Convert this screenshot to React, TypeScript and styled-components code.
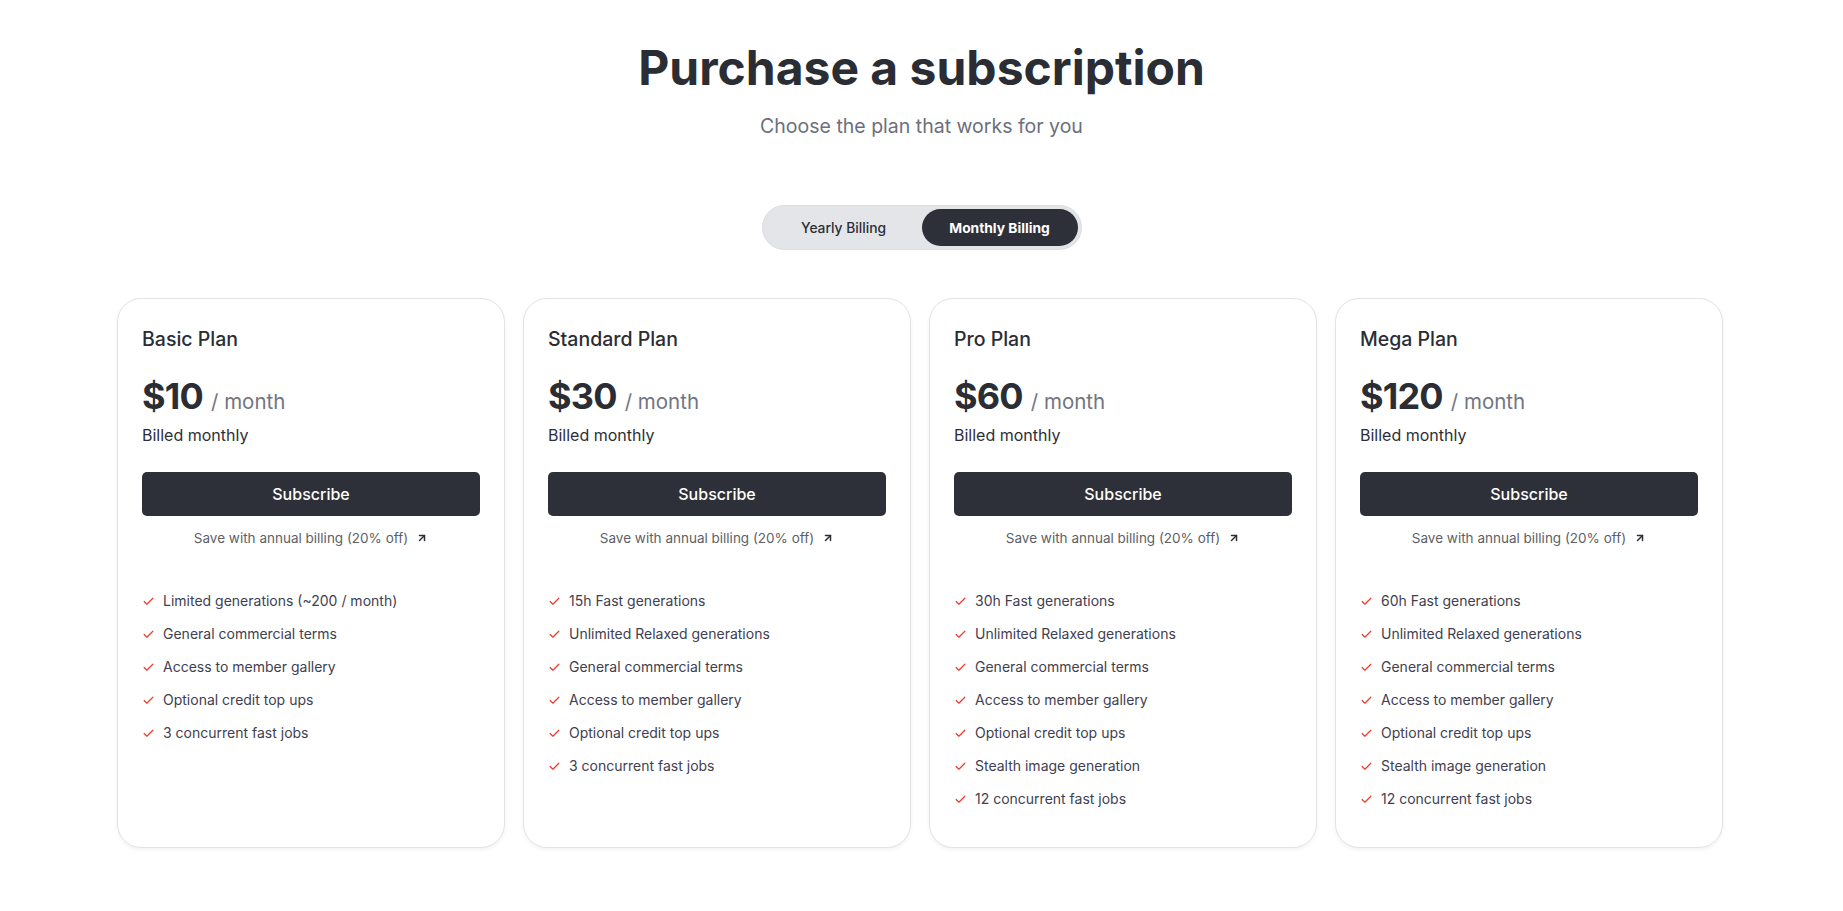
import React from "react";
import styled, { createGlobalStyle } from "styled-components";
import { Check, ArrowUpRight } from "lucide-react";

const GlobalStyle = createGlobalStyle`
  html, body { margin: 0; padding: 0; background: #ffffff; }
  body { font-family: "Inter", "Noto Sans", "Liberation Sans", sans-serif; color: #2d2f36; -webkit-font-smoothing: antialiased; }
  * { box-sizing: border-box; }
`;

const Page = styled.main`
  display: flex;
  flex-direction: column;
  align-items: center;
  padding: 40px 0 60px;
`;

const Title = styled.h1`
  margin: 0;
  font-size: 48px;
  line-height: 56px;
  font-weight: 700;
  letter-spacing: 0;
  color: #2b2d34;
`;

const Subtitle = styled.p`
  margin: 16px 0 0;
  font-size: 19.5px;
  line-height: 28px;
  font-weight: 400;
  color: #6b6f7b;
`;

const Toggle = styled.div`
  margin-top: 65px;
  display: flex;
  padding: 3px;
  width: 320px;
  height: 45px;
  border-radius: 999px;
  background: #e4e5e9;
  border: 1px solid #dcdde2;
`;

const ToggleOption = styled.button<{ $active?: boolean }>`
  flex: 1;
  border: none;
  border-radius: 999px;
  font-family: inherit;
  font-size: 13.8px;
  font-weight: ${(p) => (p.$active ? 700 : 500)};
  color: ${(p) => (p.$active ? "#ffffff" : "#2d2f36")};
  background: ${(p) => (p.$active ? "#2e3039" : "transparent")};
  cursor: pointer;
`;

const Grid = styled.section`
  margin: 48px 3px 0 0;
  width: 1606px;
  display: grid;
  grid-template-columns: repeat(4, 1fr);
  gap: 18px;
`;

const Card = styled.article`
  display: flex;
  flex-direction: column;
  padding: 26px 24px 38px;
  border: 1px solid #e3e3e6;
  border-radius: 24px;
  background: #ffffff;
  box-shadow: 0 2px 4px rgba(0, 0, 0, 0.05);
`;

const PlanName = styled.h2`
  margin: 0;
  font-size: 19.5px;
  line-height: 28px;
  font-weight: 500;
  color: #2b2d34;
`;

const PriceRow = styled.div`
  margin-top: 23px;
  display: flex;
  align-items: baseline;
  gap: 8px;
`;

const Price = styled.span`
  font-size: 36px;
  line-height: 40px;
  font-weight: 650;
  color: #2b2d34;
  letter-spacing: -0.8px;
`;

const Per = styled.span`
  font-size: 20.5px;
  font-weight: 400;
  color: #737580;
`;

const Billed = styled.div`
  margin-top: 7px;
  font-size: 16px;
  line-height: 24px;
  color: #2d2f36;
`;

const SubscribeButton = styled.button`
  margin-top: 25px;
  height: 44px;
  width: 100%;
  border: none;
  border-radius: 5px;
  background: #2e3039;
  color: #ffffff;
  font-family: inherit;
  font-size: 16px;
  font-weight: 500;
  cursor: pointer;
`;

const SaveLink = styled.a`
  margin-top: 12px;
  display: flex;
  justify-content: center;
  align-items: center;
  gap: 8px;
  font-size: 13.5px;
  line-height: 20px;
  color: #5d5f68;
  text-decoration: none;
  svg { color: #2d2f36; }
`;

const Features = styled.ul`
  list-style: none;
  margin: 43px 0 0;
  padding: 0;
  display: flex;
  flex-direction: column;
  gap: 13px;
`;

const Feature = styled.li`
  display: flex;
  align-items: center;
  gap: 8px;
  font-size: 14px;
  line-height: 20px;
  color: #3f4050;
  svg { color: #ef3b2d; flex: none; }
`;

type Plan = { name: string; price: string; features: string[] };

const plans: Plan[] = [
  {
    name: "Basic Plan",
    price: "$10",
    features: [
      "Limited generations (~200 / month)",
      "General commercial terms",
      "Access to member gallery",
      "Optional credit top ups",
      "3 concurrent fast jobs",
    ],
  },
  {
    name: "Standard Plan",
    price: "$30",
    features: [
      "15h Fast generations",
      "Unlimited Relaxed generations",
      "General commercial terms",
      "Access to member gallery",
      "Optional credit top ups",
      "3 concurrent fast jobs",
    ],
  },
  {
    name: "Pro Plan",
    price: "$60",
    features: [
      "30h Fast generations",
      "Unlimited Relaxed generations",
      "General commercial terms",
      "Access to member gallery",
      "Optional credit top ups",
      "Stealth image generation",
      "12 concurrent fast jobs",
    ],
  },
  {
    name: "Mega Plan",
    price: "$120",
    features: [
      "60h Fast generations",
      "Unlimited Relaxed generations",
      "General commercial terms",
      "Access to member gallery",
      "Optional credit top ups",
      "Stealth image generation",
      "12 concurrent fast jobs",
    ],
  },
];

export default function App() {
  return (
    <>
      <GlobalStyle />
      <Page>
        <Title>Purchase a subscription</Title>
        <Subtitle>Choose the plan that works for you</Subtitle>
        <Toggle>
          <ToggleOption>Yearly Billing</ToggleOption>
          <ToggleOption $active>Monthly Billing</ToggleOption>
        </Toggle>
        <Grid>
          {plans.map((p) => (
            <Card key={p.name}>
              <PlanName>{p.name}</PlanName>
              <PriceRow>
                <Price>{p.price}</Price>
                <Per>/ month</Per>
              </PriceRow>
              <Billed>Billed monthly</Billed>
              <SubscribeButton>Subscribe</SubscribeButton>
              <SaveLink href="#">
                Save with annual billing (20% off)
                <ArrowUpRight size={12} strokeWidth={3} />
              </SaveLink>
              <Features>
                {p.features.map((f) => (
                  <Feature key={f}>
                    <Check size={13} strokeWidth={2.25} />
                    {f}
                  </Feature>
                ))}
              </Features>
            </Card>
          ))}
        </Grid>
      </Page>
    </>
  );
}
